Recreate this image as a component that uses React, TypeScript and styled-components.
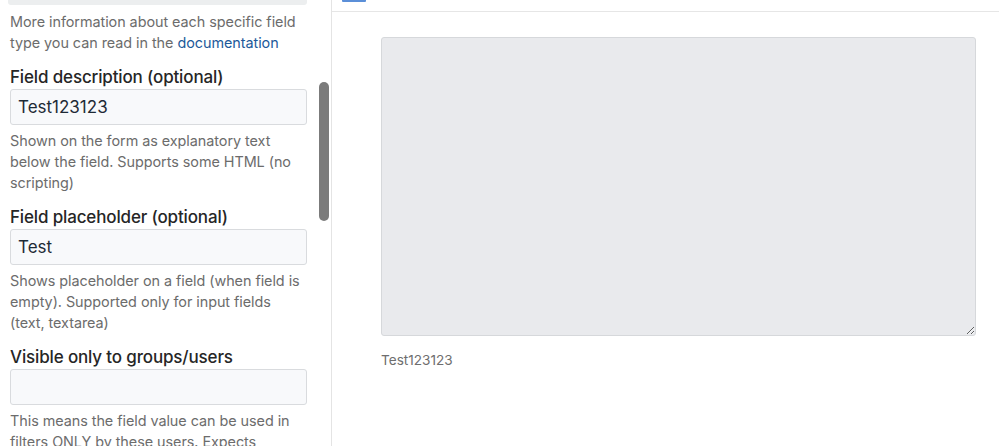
import React from 'react';
import styled, { createGlobalStyle } from 'styled-components';

const GlobalStyle = createGlobalStyle`
  html, body {
    margin: 0;
    padding: 0;
    background: #fff;
    overflow: hidden;
  }
  body {
    font-family: Inter, "Liberation Sans", Arial, sans-serif;
    color: #222;
  }
`;

const Page = styled.div`
  display: flex;
  width: 999px;
  height: 446px;
  overflow: hidden;
`;

const Sidebar = styled.aside`
  position: relative;
  width: 331px;
  flex-shrink: 0;
  border-right: 1px solid #e4e4e4;
  overflow: hidden;
`;

const SidebarInner = styled.div`
  width: 297px;
  padding-left: 10px;
`;

const SelectTail = styled.div`
  height: 5px;
  margin-left: -2px;
  width: 299px;
  background: #eceeef;
  border-radius: 0 0 3px 3px;
`;

const Help = styled.p<{ $top?: number }>`
  margin: ${(p) => p.$top ?? 5}px 0 0;
  font-size: 14.4px;
  line-height: 21px;
  color: #6c6c6c;
  letter-spacing: -0.05px;

  a {
    color: #1d5a9a;
    text-decoration: none;
  }
`;

const Label = styled.label`
  display: block;
  margin-top: 13px;
  font-size: 17px;
  line-height: 22px;
  font-weight: 500;
  color: #262626;
  letter-spacing: -0.15px;
`;

const Input = styled.div`
  box-sizing: border-box;
  margin-top: 1px;
  height: 36px;
  padding: 0 7px;
  display: flex;
  align-items: center;
  background: #f8f9fb;
  border: 1px solid #d9dbde;
  border-radius: 3px;
  font-size: 17px;
  color: #1e2a36;
`;

const ScrollThumb = styled.div`
  position: absolute;
  left: 319px;
  top: 82px;
  width: 10px;
  height: 139px;
  border-radius: 5px;
  background: #7b7b7b;
`;

const Main = styled.main`
  flex: 1;
  display: flex;
  flex-direction: column;
`;

const TopBar = styled.div`
  height: 11px;
  border-bottom: 1px solid #e6e6e6;
  padding-left: 10px;
`;

const TabMark = styled.div`
  width: 24px;
  height: 2px;
  background: #5b8fd8;
  border-radius: 0 0 1px 1px;
`;

const Preview = styled.div`
  padding: 25px 23px 0 49px;
  display: flex;
  flex-direction: column;
`;

const Area = styled.textarea`
  box-sizing: border-box;
  width: 595px;
  height: 299px;
  margin: 0;
  background: #e9eaed;
  border: 1px solid #d6d8db;
  border-radius: 3px;
  resize: both;
  font-family: inherit;
  outline: none;
`;

const Caption = styled.div`
  margin-top: 15px;
  font-size: 13.6px;
  line-height: 18px;
  color: #6e6e6e;
`;

export default function App() {
  return (
    <Page>
      <GlobalStyle />
      <Sidebar>
        <SidebarInner>
          <SelectTail />
          <Help $top={6}>
            More information about each specific field type you can read in the{' '}
            <a href="#">documentation</a>
          </Help>
          <Label>Field description (optional)</Label>
          <Input>Test123123</Input>
          <Help>Shown on the form as explanatory text below the field. Supports some HTML (no scripting)</Help>
          <Label>Field placeholder (optional)</Label>
          <Input>Test</Input>
          <Help>Shows placeholder on a field (when field is empty). Supported only for input fields (text, textarea)</Help>
          <Label>Visible only to groups/users</Label>
          <Input />
          <Help>This means the field value can be used in filters ONLY by these users. Expects comma separated list</Help>
        </SidebarInner>
        <ScrollThumb />
      </Sidebar>
      <Main>
        <TopBar>
          <TabMark />
        </TopBar>
        <Preview>
          <Area readOnly />
          <Caption>Test123123</Caption>
        </Preview>
      </Main>
    </Page>
  );
}
